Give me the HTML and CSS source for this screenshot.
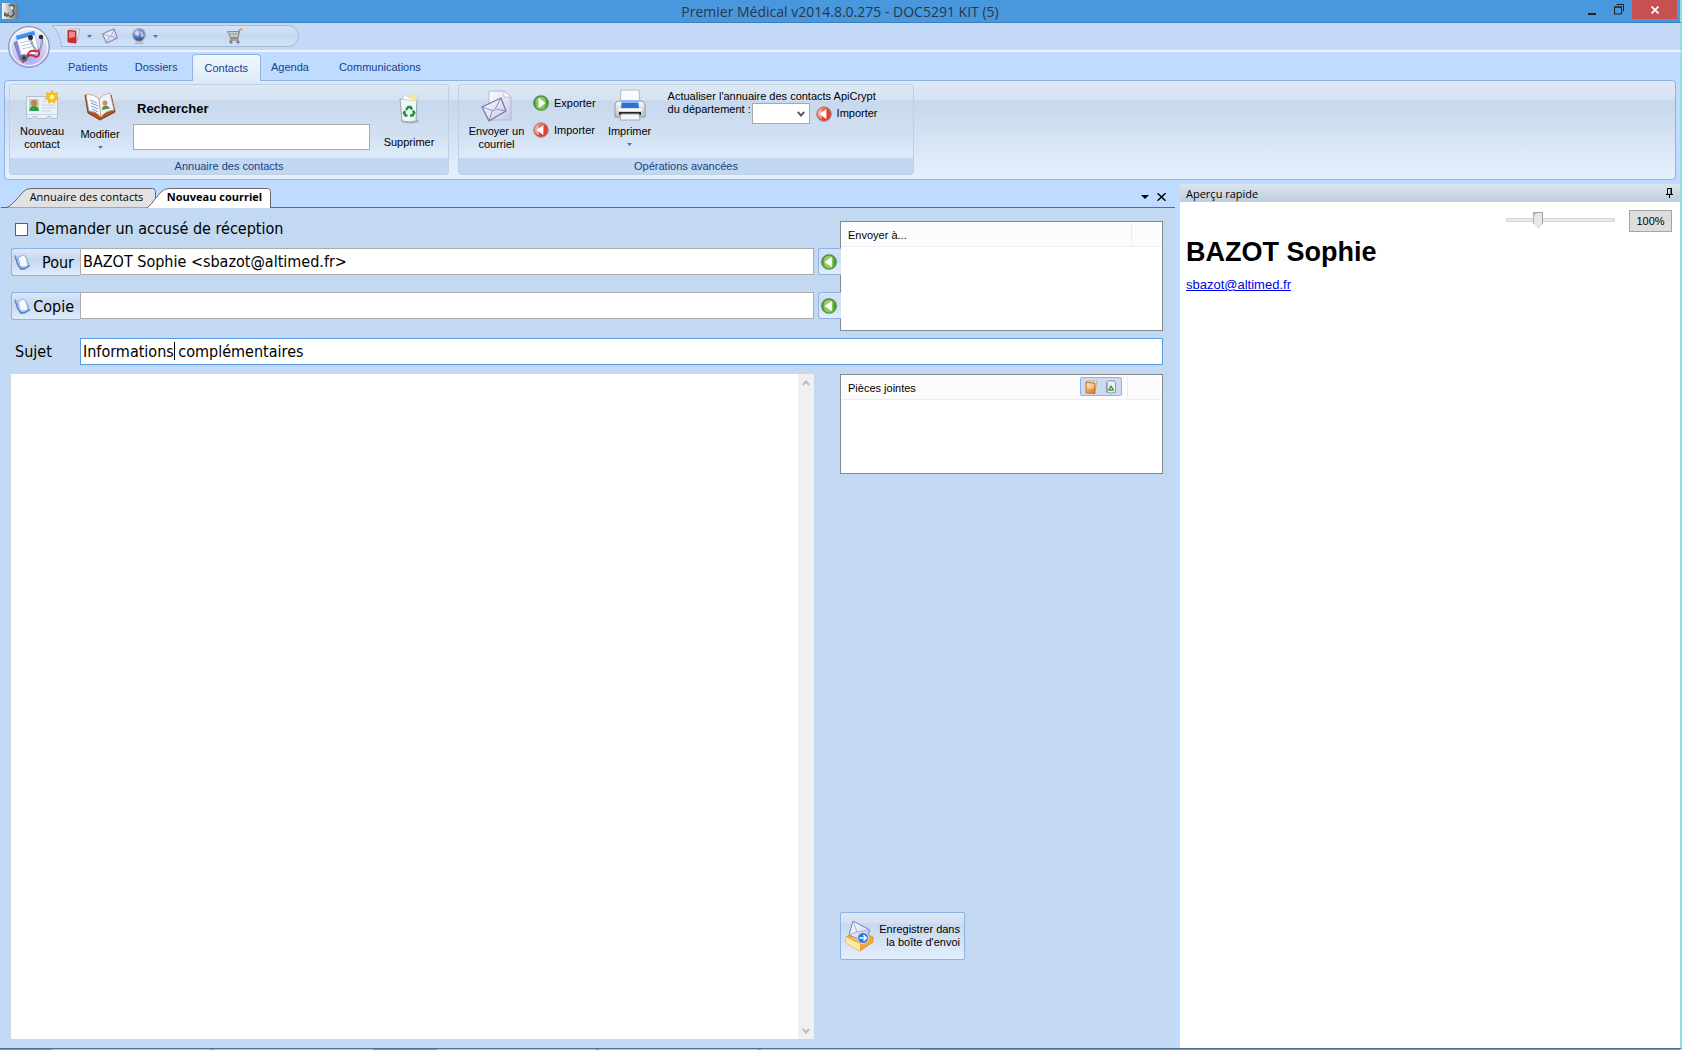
FILE: index.html
```html
<!DOCTYPE html>
<html lang="fr">
<head>
<meta charset="utf-8">
<title>Premier Médical v2014.8.0.275 - DOC5291 KIT (5)</title>
<link rel="stylesheet" href="styles.css">
</head>
<body>
<svg class="defs" aria-hidden="true">
  <defs>
    <linearGradient id="g-green" x1="0" y1="0" x2="0" y2="1"><stop offset="0" stop-color="#8fcf5e"/><stop offset=".5" stop-color="#3f9e1c"/><stop offset="1" stop-color="#8be04a"/></linearGradient>
    <linearGradient id="g-red" x1="0" y1="0" x2="1" y2="1"><stop offset="0" stop-color="#f7b0a0"/><stop offset=".5" stop-color="#e04434"/><stop offset="1" stop-color="#ee3a30"/></linearGradient>
    <linearGradient id="g-paper" x1="0" y1="0" x2="1" y2="1"><stop offset="0" stop-color="#fff"/><stop offset="1" stop-color="#c3c8e4"/></linearGradient>
    <linearGradient id="g-gray" x1="0" y1="0" x2="0" y2="1"><stop offset="0" stop-color="#fdfdfe"/><stop offset="1" stop-color="#b9bdc6"/></linearGradient>
    <linearGradient id="g-blue" x1="0" y1="0" x2="1" y2="1"><stop offset="0" stop-color="#f4f8ff"/><stop offset="1" stop-color="#7f9fd8"/></linearGradient>
    <linearGradient id="g-orange" x1="0" y1="0" x2="1" y2="1"><stop offset="0" stop-color="#f8c98a"/><stop offset="1" stop-color="#e2781c"/></linearGradient>
    <radialGradient id="g-orb" cx=".5" cy=".75" r=".7"><stop offset="0" stop-color="#a9a6f2"/><stop offset=".5" stop-color="#c9c9f5"/><stop offset="1" stop-color="#f0f1f8"/></radialGradient>
    <radialGradient id="g-globe" cx=".35" cy=".3" r=".8"><stop offset="0" stop-color="#cfe0fa"/><stop offset=".5" stop-color="#4f74bc"/><stop offset="1" stop-color="#27407f"/></radialGradient>
    <symbol id="i-left-green" viewBox="0 0 16 16"><circle cx="8" cy="8" r="7.200" fill="url(#g-green)" stroke="#56804a" stroke-width="1.300"/><circle cx="7.6" cy="7.8" r="5" fill="#dff5c8" opacity=".4"/><path d="M10.800 3v10L3.400 8z" fill="#fff"/></symbol>
    <symbol id="i-right-green" viewBox="0 0 16 16"><circle cx="8" cy="8" r="7.200" fill="url(#g-green)" stroke="#56804a" stroke-width="1.300"/><circle cx="7.6" cy="7.8" r="5" fill="#dff5c8" opacity=".4"/><path d="M5.600 3v10L12.600 8z" fill="#fff"/></symbol>
    <symbol id="i-left-red" viewBox="0 0 16 16"><circle cx="8" cy="8" r="7.300" fill="url(#g-red)" stroke="#a58a8c"/><path d="M5.500 2.500Q2 4 2 8t4 5.500z" fill="#f9d3cb" opacity=".6"/><path d="M10.400 3v10L3.200 8z" fill="#fff"/></symbol>
    <symbol id="i-notebook" viewBox="0 0 17 16"><path d="M3.500 3.500L7 2l2.500-1L12 3l3.500 9-4.500 3-4.500.5L3 10z" fill="url(#g-blue)" stroke="#7f9fda" stroke-width=".8"/><path d="M5 4.500L9 1.500 11.500 4l2 7.500-3.500 1-3.500-1z" fill="#f9faff"/><path d="M.8 1.500l3 9L7 15l4-.3 5-3.200" fill="none" stroke="#557fcb" stroke-width="1.300"/><path d="M1 2l3 1.500 1.500 7" fill="none" stroke="#8fb2ea"/></symbol>
  </defs>
</svg>

<div class="app">
  <header class="titlebar">
    <svg class="title-icon" width="16" height="16" viewBox="0 0 16 16"><defs><linearGradient id="g-ti"><stop offset="0" stop-color="#f6f6f4"/><stop offset="1" stop-color="#74777a"/></linearGradient></defs><rect width="16" height="16" fill="url(#g-ti)"/><path d="M7 3q3-3 5 0l-1 4 1 4-3 3-3-2" fill="none" stroke="#555" stroke-width="1.500"/><path d="M2 9l3 2 2-2-1 5-4-1z" fill="#666"/><circle cx="10" cy="5" r="1.500" fill="#e4e4e4"/></svg>
    <h1 class="title">Premier Médical v2014.8.0.275 - DOC5291 KIT (5)</h1>
    <div class="window-controls">
      <button class="win" type="button" aria-label="Réduire"><svg width="10" height="12" viewBox="0 0 10 12"><path d="M0 9h8v2H0z" fill="#1f1f1f"/></svg></button>
      <button class="win" type="button" aria-label="Restaurer"><svg width="10" height="11" viewBox="0 0 10 11"><path d="M.5 3h7v7h-7zM0 3h8M2.500 .5h7v7" fill="none" stroke="#1f1f1f"/></svg></button>
      <button class="win win-close" type="button" aria-label="Fermer"><svg width="8" height="8" viewBox="0 0 8 8"><path d="M.5.5l7 7M7.500.5l-7 7" stroke="#fff" stroke-width="1.700"/></svg></button>
    </div>
  </header>

  <div class="quickbar">
    <button class="orb" type="button" aria-label="Menu principal"><svg width="42" height="42" viewBox="0 0 42 42">
      <circle cx="21" cy="21" r="20.300" fill="url(#g-orb)" stroke="#8b92b4" stroke-width="1.200"/><circle cx="21" cy="21" r="18.500" fill="none" stroke="#fff" opacity=".8"/>
      <path d="M6 17l5-3 7 17-6 3z" fill="#8c85dc" stroke="#5e5ab8" stroke-width=".6"/>
      <path d="M8 10l18-5 5 22-17 5z" fill="#fff" stroke="#9cb0d4" stroke-width=".6"/><path d="M8 10l18-5 1.200 4L9 14z" fill="#3e92ea"/>
      <path d="M12 17l12-3M13 20l12-3M14 23l10-2.500" stroke="#a9c8ec" stroke-width="1"/>
      <path d="M22 12q4 12 8 13 4-1 4-13" fill="none" stroke="#5e6a84" stroke-width="2"/><path d="M22 12q4 12 8 13 4-1 4-13" fill="none" stroke="#d3dbea" stroke-width=".9"/>
      <circle cx="22.500" cy="11.500" r="2.500" fill="#2c2f3a"/><circle cx="33" cy="11" r="2.300" fill="#2c2f3a"/>
      <path d="M30 24q3 6-2 7-6-4-9 0-1 4-5 5M29 26q-8-4-10 5" fill="none" stroke="#c82440" stroke-width="1.900"/>
      <circle cx="16" cy="32" r="3.800" fill="#68707f"/><circle cx="16" cy="32" r="1.800" fill="#323844"/></svg></button>
    <div class="quick-tools">
      <svg class="quick-shape" width="248" height="22" viewBox="0 0 248 22"><defs><linearGradient id="g-q" x1="0" y1="0" x2="0" y2="1"><stop offset="0" stop-color="#d6e3f5"/><stop offset=".5" stop-color="#c6d9f1"/><stop offset="1" stop-color="#d3e1f6"/></linearGradient></defs><path d="M1 .5H237a10.500 10.500 0 0 1 0 21H10.500Q9 7 1 .5z" fill="url(#g-q)" stroke="#9dbadc"/></svg>
      <button class="tool t-book" type="button" aria-label="Dossier"><svg width="14" height="16" viewBox="0 0 14 16"><path d="M2 1h10.500l-2 11H2z" fill="#eef0f4" stroke="#9aa0aa" stroke-width=".7"/><path d="M1 2.500L9 3v12L1 14z" fill="#d82b26" stroke="#a31d1c" stroke-width=".8"/><path d="M2 3.500l6 .3V9L2 10z" fill="#fff" opacity=".45"/></svg></button>
      <button class="tool t-drop" type="button" aria-label="Options du dossier"><svg width="5" height="3" viewBox="0 0 5 3"><path d="M0 0h5L2.500 3z" fill="#4778b8"/></svg></button>
      <button class="tool t-mail" type="button" aria-label="Courriel"><svg width="18" height="16" viewBox="0 0 18 16"><path d="M1.500 6L13 .8 16.500 10 5.500 15.200z" fill="url(#g-paper)" stroke="#7479b4"/><path d="M1.500 6l8.500 2.500L13 .8M5.500 15.200l3-6.800M16.500 10L10 8.400" fill="none" stroke="#9ca0cc" stroke-width=".8"/></svg></button>
      <button class="tool t-globe" type="button" aria-label="Internet"><svg width="16" height="16" viewBox="0 0 16 16"><path d="M3 15.500h8l-2-2H5z" fill="#d5d7dc" stroke="#9296a0" stroke-width=".6"/><circle cx="7" cy="7" r="6.300" fill="url(#g-globe)" stroke="#98a4bc"/><path d="M3 4l3-1 1 2-1 3-2-1zM9 3l2 1 1 4-2 2-1.500-3z" fill="#dbe6f8" opacity=".7"/><path d="M11 1q5 6-1 12.500" fill="none" stroke="#b0b4bd" stroke-width="1.200"/></svg></button>
      <button class="tool t-drop2" type="button" aria-label="Options Internet"><svg width="5" height="3" viewBox="0 0 5 3"><path d="M0 0h5L2.500 3z" fill="#4778b8"/></svg></button>
      <button class="tool t-cart" type="button" aria-label="Panier"><svg width="16" height="16" viewBox="0 0 16 16"><path d="M.5 3.500h12l-1.500 6H3z" fill="#d8d9db" stroke="#8e9094"/><path d="M3 4l1 5M6 4l.5 5M9 4v5M1.500 6h10.500" stroke="#95979b" stroke-width=".8"/><path d="M14.500 1L12 2l-1 8.500H3" fill="none" stroke="#87898c"/><path d="M3 11h9v2H2z" fill="#a2a3a5"/><circle cx="4" cy="14" r="1.600" fill="#77797c"/><circle cx="11" cy="14" r="1.600" fill="#77797c"/><circle cx="14.500" cy="1.500" r="1.300" fill="#f2a24c"/></svg></button>
    </div>
  </div>

  <nav class="ribbon-tabs" aria-label="Ruban">
    <button class="rtab" type="button">Patients</button>
    <button class="rtab" type="button">Dossiers</button>
    <button class="rtab rtab-active" type="button">Contacts</button>
    <button class="rtab rtab-near" type="button">Agenda</button>
    <button class="rtab rtab-far" type="button">Communications</button>
  </nav>

  <section class="ribbon">
    <div class="group group-contacts">
      <div class="group-body">
        <button class="big new" type="button"><svg width="34" height="32" viewBox="0 0 34 32"><path d="M1.500 6.500h31v22h-6l-1-2h-3l-1 2h-9l-1-2h-3l-1 2h-6z" fill="#eaf0f7" stroke="#b3c2d2"/><path d="M2 24.500h30" stroke="#c8d6e2"/><rect x="4" y="9" width="10" height="12" fill="#b9dcae"/><path d="M4.500 21q0-5 4.500-5t5 5z" fill="#2f9a4c"/><circle cx="9" cy="13" r="3.200" fill="#c4815b"/><path d="M17 11h5M17 15h13M17 18h13M17 21h9" stroke="#c3d3e0"/><path d="M27 .5l1.800 3.400 4-1-1.600 3.600 2.300 2.500-3.400.8-.6 3.400-2.800-2-3 2-.2-3.500-3.500-1 2.400-2.600-1.300-3.200 3.800.8z" fill="#fbc413" stroke="#eda512" stroke-width=".7"/><circle cx="27" cy="7" r="2.200" fill="#fff6a8"/></svg><span>Nouveau<br>contact</span></button>
        <button class="big edit" type="button"><svg width="32" height="30" viewBox="0 0 32 30"><path d="M1 3l3 18 12 7 15-8L27 3l-1 2-9 4L6 4z" fill="#a5572d" stroke="#79391b"/><path d="M2 2.500Q10 2 15 7l2 18Q12 19 5 19z" fill="#fafbff" stroke="#cf9c74" stroke-width=".8"/><path d="M15 7q4-5 11-6l4 17q-9 1-13 7z" fill="#f0f2fb" stroke="#cf9c74" stroke-width=".8"/><path d="M6 8l7 3M7 11l7 3M7 14l7 3M8 17l6 3" stroke="#86a9e4" stroke-width="1.200"/><path d="M18 18q0-4 3-4.500t5 3z" fill="#4a9b45"/><circle cx="21" cy="11" r="2.500" fill="#c98e5e"/></svg><span>Modifier</span><svg class="drop" width="5" height="3" viewBox="0 0 5 3"><path d="M0 0h5L2.500 3z" fill="#4778b8"/></svg></button>
        <div class="search"><label for="q">Rechercher</label><input id="q" type="text"></div>
        <button class="big delete" type="button"><svg width="22" height="32" viewBox="0 0 22 32"><ellipse cx="12" cy="29" rx="9" ry="2.500" fill="#8a97a8" opacity=".6"/><path d="M2 7l17-1-1 23q-7 2-14 0z" fill="#f2f6f9" stroke="#9aa6b1"/><path d="M4 7l3-4 5 3 1-4 7 3-2 4z" fill="#fff" stroke="#bcc5cd" stroke-width=".7"/><path d="M12 1l7 4-2 4-5-3z" fill="#f8e491"/><path d="M8 18l2.300-3h2.200l1.500 2.500M15 18.500l1.200 2.500-1.700 2.500h-2.500M9.500 23.500H7.500L6 21 7.200 19" fill="none" stroke="#1e9437" stroke-width="2.500"/></svg><span>Supprimer</span></button>
      </div>
      <h2 class="group-title">Annuaire des contacts</h2>
    </div>

    <div class="group group-adv">
      <div class="group-body">
        <button class="big send" type="button"><svg width="32" height="32" viewBox="0 0 32 32"><path d="M8 1h15l7 6v23H8z" fill="url(#g-paper)" stroke="#b2b7d8"/><path d="M23 1v6h7z" fill="#fff" stroke="#aab2d2" stroke-width=".7"/><path d="M1 17L20 8l5 13-17 10z" fill="url(#g-paper)" stroke="#6e72a8" stroke-width="1.200"/><path d="M1 17l12 4 7-13M8 31l3-10M25 21l-10-2" fill="none" stroke="#8f93c2"/></svg><span>Envoyer un<br>courriel</span></button>
        <div class="stack">
          <button class="small" type="button"><svg width="16" height="16"><use href="#i-right-green"/></svg>Exporter</button>
          <button class="small" type="button"><svg width="16" height="16"><use href="#i-left-red"/></svg>Importer</button>
        </div>
        <button class="big print" type="button"><svg width="34" height="32" viewBox="0 0 34 32"><path d="M8 1h18l1 16H7z" fill="#fafbfc" stroke="#b4b9c2"/><path d="M2 17q0-5 5-5h20q5 0 5 5v11H2z" fill="url(#g-gray)" stroke="#9197a1"/><path d="M9 11h16l1 8H8z" fill="#2f6fd6"/><path d="M9 11h16l.4 3H8.600z" fill="#8bb9f4"/><rect x="5" y="20" width="24" height="2" fill="#f9fafb"/><path d="M6 23h22v3H6z" fill="#202226"/><path d="M8 25h18l1 6H7z" fill="#f4f5f7" stroke="#a4a9b2"/></svg><span>Imprimer</span><svg class="drop" width="5" height="3" viewBox="0 0 5 3"><path d="M0 0h5L2.500 3z" fill="#4778b8"/></svg></button>
        <div class="apicrypt">
          <label for="dept">Actualiser l'annuaire des contacts ApiCrypt<br>du département :</label>
          <div class="dept-row">
            <span class="select-wrap"><select id="dept"><option></option></select><svg width="8" height="6" viewBox="0 0 8 6"><path d="M.8.8L4 4.500 7.200.8" fill="none" stroke="#4c4f54" stroke-width="1.800"/></svg></span>
            <button class="small" type="button"><svg width="16" height="16"><use href="#i-left-red"/></svg>Importer</button>
          </div>
        </div>
      </div>
      <h2 class="group-title">Opérations avancées</h2>
    </div>
  </section>

  <div class="workspace">
    <main class="document">
      <div class="doc-tabs">
        <button class="dtab" type="button"><svg class="dtab-shape" width="149" height="20" viewBox="0 0 149 20"><path d="M0 19.500Q5 17 9 12L16 4Q19 .5 24 .5H145.500q3 0 3 3V19.500" fill="#e2e2e2" stroke="#696969"/></svg><span>Annuaire des contacts</span></button>
        <button class="dtab dtab-active" type="button"><svg class="dtab-shape" width="124" height="20" viewBox="0 0 124 20"><path d="M0 20Q5 16 8 11L14 4Q17 .5 22 .5H120.500q3 0 3 3V20" fill="#fff" stroke="#696969"/></svg><span>Nouveau courriel</span></button>
        <div class="doc-actions">
          <button class="icon-btn" type="button" aria-label="Liste des onglets"><svg width="8" height="4" viewBox="0 0 8 4"><path d="M0 0h8L4 4z"/></svg></button>
          <button class="icon-btn" type="button" aria-label="Fermer l'onglet"><svg width="9" height="8" viewBox="0 0 9 8"><path d="M.5.3l8 7.400M8.500.3l-8 7.400" stroke="#000" stroke-width="1.500"/></svg></button>
        </div>
      </div>

      <form class="mail">
        <div class="recipients">
          <label class="receipt"><input type="checkbox">Demander un accusé de réception</label>
          <div class="line">
            <button class="pick" type="button"><svg width="17" height="16"><use href="#i-notebook"/></svg><span>Pour</span></button>
            <input class="field" type="text" aria-label="Pour" value="BAZOT Sophie &lt;sbazot@altimed.fr&gt;">
            <button class="arrow" type="button" aria-label="Ajouter à Pour"><svg width="16" height="16"><use href="#i-left-green"/></svg></button>
          </div>
          <div class="line">
            <button class="pick" type="button"><svg width="17" height="16"><use href="#i-notebook"/></svg><span>Copie</span></button>
            <input class="field" type="text" aria-label="Copie">
            <button class="arrow" type="button" aria-label="Ajouter à Copie"><svg width="16" height="16"><use href="#i-left-green"/></svg></button>
          </div>
        </div>
        <section class="list list-to">
          <div class="list-head"><h3>Envoyer à...</h3></div>
        </section>
        <div class="subject">
          <label for="subject">Sujet</label>
          <div class="subject-box"><input id="subject" class="field" type="text" value="Informations complémentaires"><span class="caret"></span></div>
        </div>
        <div class="body-box">
          <textarea aria-label="Message"></textarea>
          <div class="scroll">
            <svg width="8" height="6" viewBox="0 0 8 6"><path d="M.8 5L4 1.500 7.200 5" fill="none" stroke="#bdbdbd" stroke-width="2"/></svg>
            <svg width="8" height="6" viewBox="0 0 8 6"><path d="M.8 1L4 4.500 7.200 1" fill="none" stroke="#bdbdbd" stroke-width="2"/></svg>
          </div>
        </div>
        <div class="side">
          <section class="list list-files">
            <div class="list-head"><h3>Pièces jointes</h3>
              <div class="file-tools">
                <button type="button" aria-label="Joindre un fichier"><svg width="13" height="14" viewBox="0 0 13 14"><path d="M2 1h10l-2 10H2z" fill="#f4f1ec" stroke="#a19c92" stroke-width=".7"/><path d="M1 2l9 1v10.500L1 13z" fill="url(#g-orange)" stroke="#b86a1e" stroke-width=".8"/><path d="M2 3.200l7 .8V8L2 9z" fill="#fff" opacity=".4"/></svg></button>
                <button type="button" aria-label="Retirer le fichier"><svg width="12" height="14" viewBox="0 0 12 14"><path d="M1.500 2.500L4 .8h5l1.500 1.700v9.700q-4.500 2-9 0z" fill="#eceef1" stroke="#858a91" stroke-width=".9"/><path d="M2.500 3v9" stroke="#b5b9be"/><path d="M6 6l2.300 4H3.700z" fill="#fff" stroke="#2f9f40" stroke-width="1.400" stroke-linejoin="round"/></svg></button>
              </div>
            </div>
          </section>
          <button class="save" type="button"><svg width="29" height="32" viewBox="0 0 29 32"><path d="M1 17l12-6 15 6v5L15 31 1 23z" fill="#f4a62e" stroke="#d8862a" stroke-width=".7"/><path d="M1 17l14 7v7L1 23z" fill="#fde8a4"/><path d="M5 17l9-4 10 4-9 5z" fill="#f7d27c"/><path d="M8 1l17 9-5 12L4 15z" fill="url(#g-paper)" stroke="#6f83b8"/><path d="M8 1l4 11 13-2M4 15l8-3" fill="none" stroke="#9fb0d6"/><circle cx="18" cy="18" r="5.500" fill="#2b7ade" stroke="#cfe2fb"/><path d="M14.500 18h6M18.500 15.300l2.700 2.700-2.700 2.700" fill="none" stroke="#fff" stroke-width="1.600"/></svg><span>Enregistrer dans<br>la boîte d'envoi</span></button>
        </div>
      </form>
    </main>

    <aside class="preview">
      <header class="preview-head"><h2>Aperçu rapide</h2><button class="icon-btn" type="button" aria-label="Épingler"><svg width="8" height="10" viewBox="0 0 8 10"><path d="M1.500 6.500v-6h4v6M0 6.500h7M3.500 7v3" fill="none" stroke="#000"/><path d="M4.500 0h1.500v7H4.500z"/></svg></button></header>
      <div class="zoom"><input type="range" min="0" max="100" value="27" aria-label="Zoom"><button class="zoom-reset" type="button">100%</button></div>
      <h3 class="name">BAZOT Sophie</h3>
      <a class="mailto" href="mailto:sbazot@altimed.fr">sbazot@altimed.fr</a>
    </aside>
  </div>
  <footer class="taskbar"><span></span><span></span><span class="apart"></span><span></span><span></span></footer>
</div>
</body>
</html>
```

FILE: styles.css
```css
* { box-sizing: border-box; }

body {
  margin: 0;
  background: #fff;
  font: 11px/13px "Liberation Sans", Arial, sans-serif;
  color: #000;
}

button, input, select, textarea { font: inherit; color: inherit; margin: 0; }
button { border: 0; padding: 0; background: none; }
input, textarea { outline: 0; }
h1, h2, h3 { margin: 0; font-weight: normal; font-size: inherit; }
svg { display: block; flex: none; }
.defs { position: absolute; width: 0; height: 0; }

.app {
  display: flex;
  flex-direction: column;
  min-height: 100vh;
  padding: 0 6px 6px 0;
  background: #fff;
}
.app > * { border-right: 2px solid #94dce6; }

/* Title bar */
.titlebar {
  display: grid;
  grid-template-columns: 1fr auto 1fr;
  align-items: center;
  height: 23px;
  background: #4997dd;
  border-bottom: 1px solid #3d7db9;
}
.title-icon { margin-left: 2px; }
.title { padding-top: 2px; font: 14px/20px "Open Sans", "Noto Sans", sans-serif; color: #27384a; }
.window-controls { display: flex; justify-content: flex-end; align-self: start; padding-right: 3px; }
.win { display: flex; align-items: center; justify-content: center; width: 26px; height: 19px; }
.win-close { width: 45px; background: #c75050; }

/* Quick access */
.quickbar {
  position: relative;
  height: 29px;
  padding: 2px 0 0 51px;
  background: #c3d9f7;
  border-bottom: 2px solid #edf2fb;
}
.orb { position: absolute; left: 8px; top: 3px; z-index: 2; }
.quick-tools { position: relative; display: flex; align-items: center; width: 248px; height: 22px; padding-left: 16px; }
.quick-shape { position: absolute; left: 0; top: 0; }
.tool { position: relative; }
.t-drop { margin-left: 6px; }
.t-drop2 { margin-left: 5px; }
.t-mail { margin-left: 9px; }
.t-globe { margin-left: 13px; }
.t-cart { margin-left: 69px; }

/* Ribbon */
.ribbon-tabs {
  display: flex;
  gap: 3px;
  height: 28px;
  padding: 2px 0 0 56px;
  background: #bfdbff;
}
.rtab { padding: 0 12px; color: #15428b; }
.rtab-active {
  position: relative;
  z-index: 1;
  height: 27px;
  margin-left: -1px;
  background: linear-gradient(#f0f6ff, #e0ebf8);
  border: 1px solid #8db2e3;
  border-bottom: 0;
  border-radius: 4px 4px 0 0;
}
.rtab-near { margin-left: -5px; }
.rtab-far { margin-left: 3px; }
.ribbon {
  position: relative;
  display: flex;
  gap: 9px;
  height: 104px;
  padding: 4px 4px 8px 9px;
  background: #bfdbff;
}
.ribbon::before {
  content: "";
  position: absolute;
  inset: 0 4px 4px 4px;
  background: linear-gradient(#dfe8f6 0, #d7e3f3 19px, #c6d7ee 20px, #d0dff0 45px, #e6f1ff);
  border: 1px solid #8db2e3;
  border-radius: 4px;
}
.group {
  position: relative;
  display: flex;
  flex-direction: column;
  height: 91px;
  background: linear-gradient(#dde8f5 0, #d6e2f1 15px, #c7d8ed 16px, #d1e0f1 48px, #deebfa 74px);
  border: 1px solid #bed0e4;
  border-radius: 3px;
}
.group-contacts { width: 440px; }
.group-adv { width: 456px; }
.group-body { display: flex; flex: 1; }
.group-title { height: 16px; line-height: 16px; text-align: center; color: #15428b; background: #c1d8f0; }
.big { display: flex; flex: none; flex-direction: column; align-items: center; height: 72px; }
.drop { margin-top: 5px; }
.new { width: 64px; padding-top: 5px; }
.new span { margin-top: 3px; }
.edit { width: 52px; padding-top: 7px; }
.edit span { margin-top: 6px; }
.search { display: flex; flex: none; flex-direction: column; width: 237px; margin-left: 7px; padding-top: 16px; }
.search label { padding-left: 4px; font-size: 13px; line-height: 15px; font-weight: bold; }
.search input { height: 26px; margin-top: 8px; border: 1px solid #ababab; }
.delete { width: 78px; padding-top: 7px; }
.delete span { margin-top: 12px; }
.send { width: 74px; padding: 5px 0 0 1px; }
.send span { margin-top: 3px; }
.stack { display: flex; flex-direction: column; gap: 11px; padding-top: 10px; }
.small { display: flex; align-items: center; gap: 5px; height: 16px; }
.print { width: 64px; margin-left: 2px; padding-top: 4px; }
.print span { margin-top: 4px; }
.apicrypt { position: relative; margin-left: 6px; padding-top: 5px; }
.apicrypt label { display: block; }
.dept-row { position: absolute; left: 84px; top: 18px; display: flex; align-items: center; gap: 6px; }
.select-wrap { display: flex; align-items: center; width: 58px; height: 21px; background: #fff; border: 1px solid #a5a9af; }
.select-wrap select { width: 44px; height: 19px; border: 0; background: none; appearance: none; }

/* Workspace */
.workspace { display: flex; flex: 1; gap: 5px; padding-left: 1px; background: #bfdbff; }
.document { display: flex; flex: 1; flex-direction: column; min-width: 0; padding-top: 4px; }
.doc-tabs {
  display: flex;
  height: 20px;
  padding-left: 6px;
  border-bottom: 1px solid #696969;
  font: 11px/15px "Open Sans", "Noto Sans", sans-serif;
}
.dtab { position: relative; width: 149px; height: 20px; padding: 0 0 3px 10px; }
.dtab-shape { position: absolute; left: 0; top: 0; }
.dtab span { position: relative; display: block; }
.dtab-active { width: 124px; margin-left: -9px; padding-left: 11px; font-weight: bold; }
.doc-actions { display: flex; align-items: center; gap: 8px; margin-left: auto; padding: 0 9px 2px 0; }

.mail {
  display: grid;
  flex: 1;
  grid-template-columns: minmax(0, 1fr) 323px;
  grid-template-rows: auto auto 1fr;
  padding: 13px 12px 9px 10px;
  background: #c2d9f1;
  font: 16px/20px "DejaVu Sans Condensed", Tahoma, sans-serif;
}
.recipients { padding-top: 1px; }
.receipt { display: flex; align-items: center; gap: 7px; height: 14px; padding-left: 4px; }
.receipt input { width: 13px; height: 13px; appearance: none; background: #fff; border: 1px solid #5f6064; }
.line { display: flex; height: 28px; margin-top: 12px; }
.line + .line { margin-top: 16px; }
.pick {
  display: flex;
  align-items: center;
  justify-content: space-between;
  width: 69px;
  padding: 0 6px 0 2px;
  background: linear-gradient(#dbe7f7, #c5d8ef 40%, #dfecfc);
  border: 1px solid #8db2e3;
  border-right: 0;
  border-radius: 3px 0 0 3px;
}
.pick span { padding-top: 2px; }
.field { flex: 1; min-width: 0; height: 27px; padding: 0 2px; background: #fff; border: 1px solid #ababab; }
.arrow {
  position: relative;
  z-index: 1;
  display: flex;
  align-items: center;
  width: 23px;
  height: 27px;
  margin: 0 -1px 0 4px;
  padding-left: 2px;
  background: linear-gradient(#d5e3f5, #cbdcf2 40%, #e2eefd);
  border: 1px solid #8db2e3;
  border-right: 0;
  border-radius: 3px 0 0 3px;
}
.list { padding: 1px; background: #fff; border: 1px solid #828790; font: 11px/13px "Liberation Sans", Arial, sans-serif; }
.list-to { height: 110px; }
.list-files { height: 100px; }
.list-head {
  --tail: 29px;
  display: flex;
  align-items: center;
  height: 24px;
  padding-left: 6px;
  background: linear-gradient(to left, #fcfcfc var(--tail), #e5eefc var(--tail), #e5eefc calc(var(--tail) + 1px), #fcfcfc calc(var(--tail) + 1px));
  border-bottom: 1px solid #e5eefc;
}
.list-files .list-head { --tail: 33px; }
.list-head h3 { flex: 1; padding-top: 2px; }
.file-tools { display: flex; align-self: start; width: 42px; height: 19px; margin: 1px 39px 0 0; background: #cbdcf2; border: 1px solid #8db2e3; border-radius: 2px; }
.file-tools button { display: flex; flex: 1; align-items: center; justify-content: center; }
.subject { grid-column: 1 / -1; display: flex; align-items: center; margin-top: 7px; }
.subject label { width: 69px; padding-left: 4px; }
.subject-box { position: relative; display: flex; flex: 1; }
.subject-box .field { border-color: #569de5; }
.caret { position: absolute; left: 94px; top: 4px; width: 1px; height: 18px; background: #000; }
.body-box { display: flex; margin: 9px 26px 0 0; background: #fff; }
.body-box textarea { flex: 1; min-width: 0; border: 0; resize: none; background: #fff; }
.scroll { display: flex; flex-direction: column; align-items: center; justify-content: space-between; width: 16px; padding: 6px 0 5px; background: #f0f0f0; }
.side { display: flex; flex-direction: column; align-items: flex-start; justify-content: space-between; margin-top: 9px; padding-bottom: 79px; }
.list-files { width: 100%; }
.save {
  display: flex;
  align-items: center;
  justify-content: space-between;
  width: 125px;
  height: 48px;
  padding: 0 4px;
  text-align: right;
  font: 11px/13px "Liberation Sans", Arial, sans-serif;
  background: linear-gradient(#dbe7f6 0, #d3e1f3 10px, #c7d9ef 11px, #e2eefc);
  border: 1px solid #8db2e3;
  border-radius: 2px;
}

/* Preview pane */
.preview { width: 500px; background: #fff; }
.preview-head {
  display: flex;
  align-items: center;
  justify-content: space-between;
  height: 18px;
  padding: 0 6px;
  background: linear-gradient(#dae5f0, #becddc);
  font: 11px/18px "Open Sans", "Noto Sans", sans-serif;
}
.preview-head h2 { padding-top: 1px; }
.zoom { display: flex; align-items: flex-start; justify-content: flex-end; gap: 14px; height: 30px; padding: 8px 8px 0 0; }
.zoom input { width: 109px; height: 20px; appearance: none; background: none; }
.zoom input::-webkit-slider-runnable-track { height: 4px; background: #e7eaea; border: 1px solid #d6d6d6; }
.zoom input::-webkit-slider-thumb {
  width: 10px;
  height: 16px;
  margin-top: -7px;
  appearance: none;
  background: linear-gradient(135deg, #ababab, #e8e8e8 20%, #e8e8e8 80%, #ababab);
  border: 1px solid #a0a0a0;
  clip-path: polygon(0 0, 100% 0, 100% 70%, 50% 100%, 0 70%);
}
.zoom-reset { width: 43px; height: 22px; background: #ddd; border: 1px solid #a5a5a5; }
.name { padding: 5px 6px 0; font-size: 27px; line-height: 30px; font-weight: bold; }
.mailto { display: block; width: max-content; margin: 10px 6px 0; font-size: 13px; line-height: 16px; color: #0000e8; }

.taskbar { display: flex; gap: 3px; height: 2px; padding-left: 52px; background: #6c98c8; border-top: 1px solid #4e7396; }
.taskbar span { width: 159px; background: #b4c4d6; }
.taskbar .apart { margin-left: 61px; }
```
